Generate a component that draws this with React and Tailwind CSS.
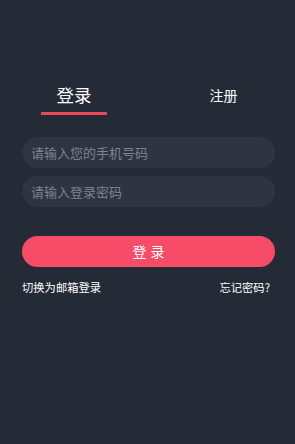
export default function App() {
  const font = { fontFamily: '"Noto Sans CJK SC", "Noto Sans", sans-serif' };
  return (
    <div className="w-[295px] h-[444px] bg-[#252a37] flex flex-col" style={font}>
      <div className="flex mt-[80px] h-[35px]">
        <div className="w-[148px] flex flex-col items-center">
          <div className="text-[17.5px] leading-[24px] text-white mt-[3px]">登录</div>
          <div className="w-[66px] h-[3px] bg-[#e9485f] mt-[5px]"></div>
        </div>
        <div className="flex-1 flex justify-center">
          <div className="text-[14px] leading-[22px] text-white mt-[4px] ml-[4px]">注册</div>
        </div>
      </div>
      <div className="pl-[22px] pr-[20px] mt-[22px] flex flex-col gap-[8px]">
        <div className="h-[31px] rounded-full bg-[#2f3441] flex items-center pl-[9px] text-[13px] text-[#7c8394]">请输入您的手机号码</div>
        <div className="h-[31px] rounded-full bg-[#2f3441] flex items-center pl-[9px] text-[13px] text-[#7c8394]">请输入登录密码</div>
      </div>
      <div className="pl-[22px] pr-[20px] mt-[29px]">
        <div className="h-[31px] rounded-full bg-[#f64c68] flex items-center justify-center text-[14px] text-white">
          <span className="tracking-[4px] pl-[4px]">登录</span>
        </div>
      </div>
      <div className="pl-[22px] pr-[25px] mt-[12px] flex justify-between text-[11.3px] leading-[16px] text-white">
        <span>切换为邮箱登录</span>
        <span>忘记密码?</span>
      </div>
    </div>
  );
}
